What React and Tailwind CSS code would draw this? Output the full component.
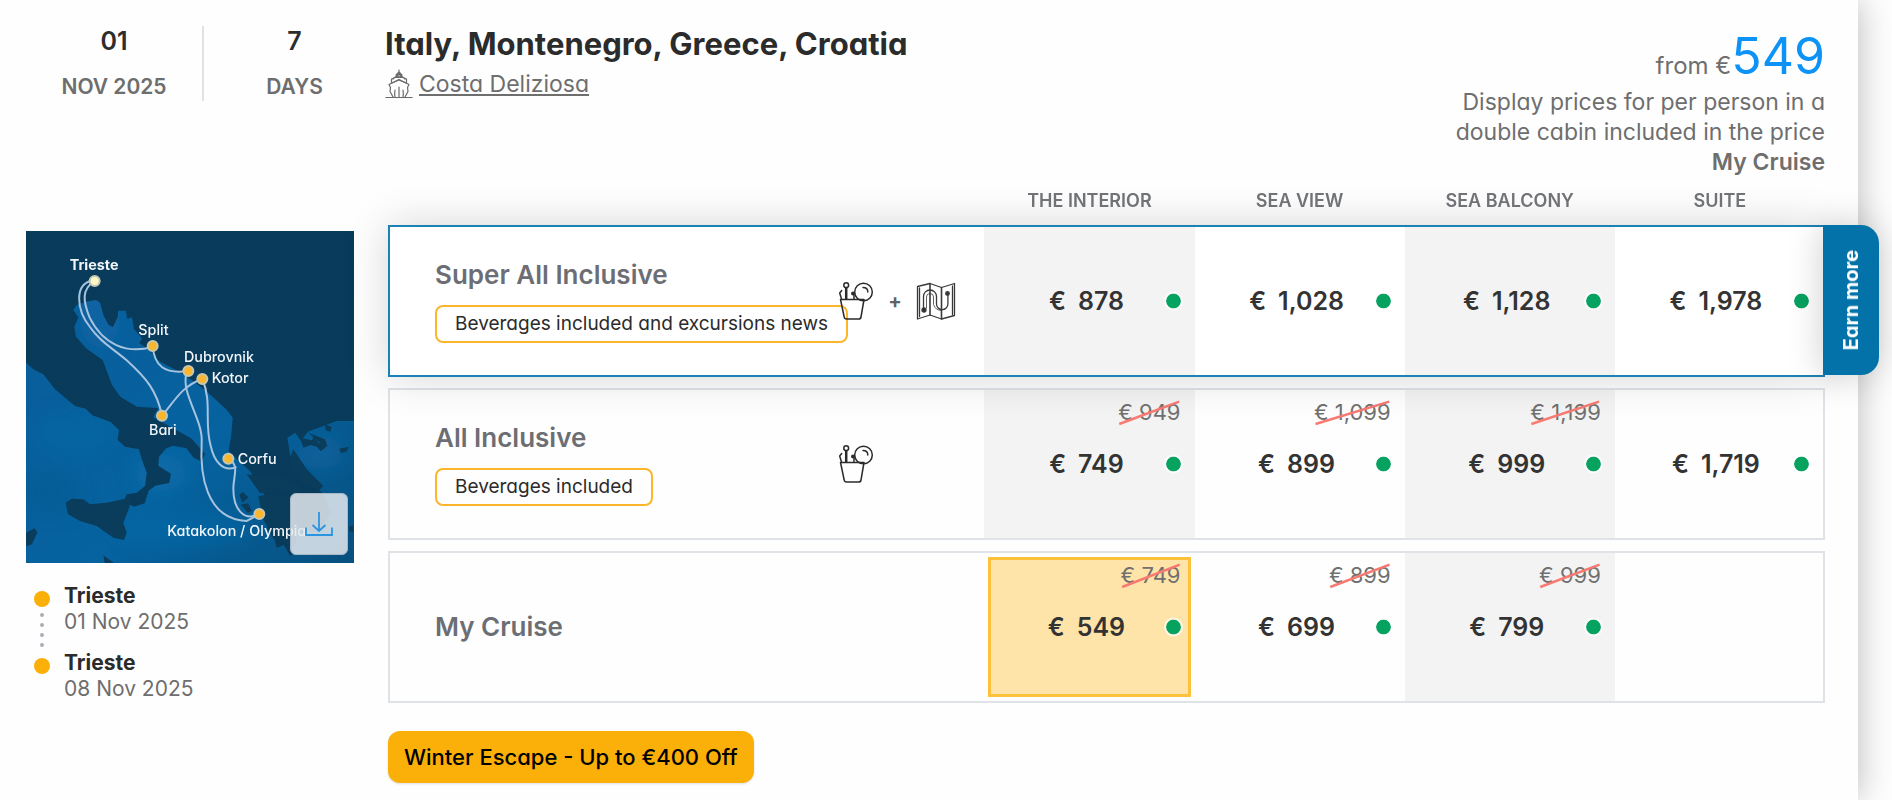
const columns = ['THE INTERIOR', 'SEA VIEW', 'SEA BALCONY', 'SUITE'];

const fares = [
  {
    name: 'Super All Inclusive',
    perk: 'Beverages included and excursions news',
    icons: ['drinks', 'map'],
    featured: true,
    prices: [{ now: '878' }, { now: '1,028' }, { now: '1,128' }, { now: '1,978' }],
  },
  {
    name: 'All Inclusive',
    perk: 'Beverages included',
    icons: ['drinks'],
    prices: [
      { now: '749', was: '949' },
      { now: '899', was: '1,099' },
      { now: '999', was: '1,199' },
      { now: '1,719' },
    ],
  },
  {
    name: 'My Cruise',
    icons: [],
    prices: [
      { now: '549', was: '749', selected: true },
      { now: '699', was: '899' },
      { now: '799', was: '999' },
      null,
    ],
  },
];

const stops = [
  { port: 'Trieste', date: '01 Nov 2025' },
  { port: 'Trieste', date: '08 Nov 2025' },
];

function ShipIcon() {
  return (
    <svg viewBox="0 0 28 30" className="h-[30px] w-7 shrink-0" fill="none" stroke="#6b6b6b" strokeWidth="1.2" strokeLinejoin="round" strokeLinecap="round" aria-hidden="true">
      <path d="M14 1v4M11 6l3-3 3 3M8 10l6-5 6 5M9 8.500h10M6.500 14v-4l7.500-3 7.500 3v4" />
      <path d="M4 15.500l10-5 10 5-1.500 3 .5 4-3 5.500M4 15.500l1.500 3-.5 4 3 5.500" />
      <path d="M14 18v10M10 21c-.5 3-.5 5 0 7M18 21c.5 3 .5 5 0 7M7 14l7-3 7 3" />
      <path d="M.8 28.500h26.400" />
    </svg>
  );
}

function DrinksIcon() {
  return (
    <svg viewBox="0 0 36 40" className="h-10 w-9 shrink-0" fill="none" stroke="#2b2b2b" strokeWidth="1.500" strokeLinejoin="round" strokeLinecap="round" aria-hidden="true">
      <path d="M2.500 18.500h23.500l-3 17.500q-.3 2-2.300 2H8.500q-2 0-2.300-2z" />
      <path d="M3.500 18l-1.800-6 2-2.500M8.700 7v11M7.700 7v11" />
      <circle cx="8.200" cy="4.200" r="2.400" />
      <circle cx="25.500" cy="11" r="8.800" />
      <circle cx="15" cy="12.500" r="1.200" fill="#2b2b2b" />
      <path d="M25 6.500c3 0 4.800 2 4.800 4.500M16 13.500v4.500" />
    </svg>
  );
}

function MapIcon() {
  return (
    <svg viewBox="0 0 40 38" className="h-[38px] w-10 shrink-0" fill="none" stroke="#3a3a3a" strokeWidth="1.300" strokeLinejoin="round" strokeLinecap="round" aria-hidden="true">
      <path d="M1.500 4.500l12.500-3 11.500 4 13-4v32l-13 3.500-11.500-4-12.500 4zM3.500 6v28.500M36.500 4v28.500" />
      <path d="M14 1.500V33M25.500 5.500V37" strokeWidth="1.600" />
      <path d="M7.500 26V14.500a6.500 6.500 0 0 1 13 0V22a5.700 5.700 0 0 0 11.400 0V12" />
      <path d="M10.500 26V15a3.500 3.500 0 0 1 7 0V22.500a8.500 8.500 0 0 0 8 6" strokeWidth=".8" />
      <circle cx="8" cy="28" r="2" fill="#2b2b2b" />
      <circle cx="31.500" cy="11.500" r="1.800" fill="#3a3a3a" />
    </svg>
  );
}

function RouteMap() {
  return (
    <svg viewBox="78 35 984 996" className="block w-full" role="img" aria-label="Cruise route map">
      <defs>
        <linearGradient id="sea" x1="0" y1="0" x2="1" y2="1">
          <stop offset="0" stopColor="#0a5c98" />
          <stop offset=".6" stopColor="#0663a0" />
          <stop offset="1" stopColor="#07507f" />
        </linearGradient>
        <radialGradient id="land" cx=".5" cy=".5" r=".8">
          <stop offset="0" stopColor="#093c5c" />
          <stop offset="1" stopColor="#083a5a" />
        </radialGradient>
        <filter id="soft"><feGaussianBlur stdDeviation="28" /></filter>
        <clipPath id="water">
          <path d="M78 430l22 20 30 15 35 45 30 25 30 25 32 8 20 20 55 20 25 24-4 30 22 20 42 8 8 30 15 40-5 40-25 20-30 5-8 22 30 15 32-10 12-38 20-15 42-8 5-28-38-24 2-26 22-26 20-8 40 8 22 28 24 12 10-24-40-45-50-28-65-36 15-28-64-4-50-30-25-35-28-75-50-35-30-35-5-30 12-28-15-22 10-15 30-10 28-5 12 8 10 38 15 28 14 8 14-30 2-20 22 0 5 25 14-5 6 35 24 28-8 14 32 24 30 32 58 30 44 30 33 26 34 30 32 30 17 22-4 50-8 50 34 34 30 26 24 40 22 35 12 32 10 28-18 18 2 20 22 35 6 22 22-8 18 32 20-8 8 60H78z" />
          <path d="M862 655l24-15 16 25 22-28 60-22 26-10h52v426H880l-4-46 6-44 80-5 30-60-20-48-50-55-30-20-20-36z" />
        </clipPath>
      </defs>
      <rect x="78" y="35" width="984" height="996" fill="url(#land)" />
      <g clipPath="url(#water)">
        <rect x="78" y="35" width="984" height="996" fill="url(#sea)" />
        <g filter="url(#soft)">
          <ellipse cx="480" cy="760" rx="80" ry="60" fill="#1279b8" opacity=".35" />
          <ellipse cx="220" cy="640" rx="120" ry="60" fill="#1173b0" opacity=".3" />
          <ellipse cx="150" cy="820" rx="90" ry="70" fill="#075285" opacity=".3" />
          <ellipse cx="560" cy="930" rx="200" ry="50" fill="#0d6fae" opacity=".4" />
          <ellipse cx="300" cy="290" rx="60" ry="100" fill="#0d68a8" opacity=".6" />
          <ellipse cx="960" cy="700" rx="70" ry="50" fill="#0e66a2" opacity=".6" />
        </g>
      </g>
      <g fill="#0a3c5c">
        <path d="M197 850l18-12 35 2 20 15 50-5 76-16-10 36-16 40 10 30-8 22-32-7-50-35-50-15-36-20z" />
        <path d="M78 940l26-13 8 12-16 36-18 6zM310 1008l32 23h-28zM718 828l10-10 18 16-18 16zM722 856l22-4 12 22-12 6z" />
        <path d="M900 655l30 6 50 18-8 10-40-12-22 8zM925 640l50 20 8 22-22-10zM975 615l20 8-4 14-14-4zM940 650l30 40-8 6-26-30zM1018 688l28-6-6 16-18 2zM1046 922l14-4v20l-12-2zM880 690l40 60 50 50-15 15-50-30-40-60zM905 745l60 48-8 16-50-30zM740 765l40 6 60-2 60 30 10 20-60 4-70-2z" />
        <path d="M775 830l60-8 60 20-5 120-20 30-22-40-18 10-40-60z" />
      </g>
      <g fill="none" stroke="#a6c3df" strokeWidth="6" strokeLinecap="round">
        <path d="M280 183c-60 10-50 90-10 140 30 45 70 65 110 100 60 55 90 90 106 166" />
        <path d="M284 185c-40 25-35 60-15 110 40 80 110 110 189 88" />
        <path d="M458 380c5 60 35 85 107 75" />
        <path d="M486 589c35-40 60-90 121-110" />
        <path d="M560 460c-20 60 50 140 45 210-5 90 10 230 135 235l38-20" />
        <path d="M607 479c30 70 5 130 25 200 10 45 35 80 75 65M685 718c35 20 15 50 15 90 0 60 30 100 78 76" />
      </g>
      <g fill="#fdb52c" stroke="#c5c8b0" strokeWidth="6">
        <circle cx="284" cy="185" r="15" fill="#fdf6c5" />
        <circle cx="458" cy="380" r="15" />
        <circle cx="565" cy="455" r="15" />
        <circle cx="607" cy="479" r="15" />
        <circle cx="486" cy="589" r="15" />
        <circle cx="685" cy="718" r="15" />
        <circle cx="778" cy="884" r="15" />
      </g>
      <g fill="#f2f6fa" fontSize="43" fontWeight="500">
        <text x="209" y="151" fontWeight="700">Trieste</text>
        <text x="415" y="347">Split</text>
        <text x="552" y="427">Dubrovnik</text>
        <text x="635" y="491">Kotor</text>
        <text x="447" y="648">Bari</text>
        <text x="713" y="733">Corfu</text>
        <text x="502" y="949">Katakolon / Olympia</text>
      </g>
    </svg>
  );
}

function PriceCell({ price, shaded, last, featured }) {
  const edge = featured ? 'border-y-2 border-[#1a82b4]' : 'border-y-2 border-[#dfe3e8]';
  return (
    <td className={`relative h-[152px] p-0 ${edge} ${last ? 'border-r-2' : ''} ${shaded && !price?.selected ? 'bg-[#f3f3f3]' : featured ? 'bg-white' : ''}`}>
      {price && (
        <div className={`flex items-center justify-center pr-1.5 text-[25px] leading-8 font-semibold text-[#333] ${price.selected ? 'mx-1 h-[140px] border-[3px] border-[#fdc13c] bg-[#fee4a8]' : ''}`}>
          <span className="flex gap-3">
            <span>€</span>
            <span>{price.now}</span>
          </span>
        </div>
      )}
      {price?.was && (
        <s className="absolute top-1.5 right-3.5 text-[22px] leading-8 text-[#707070] no-underline">
          € {price.was}
          <svg viewBox="0 0 100 40" preserveAspectRatio="none" className="absolute inset-0 h-full w-full" aria-hidden="true">
            <path d="M2 35L98 7" stroke="#f87a72" strokeWidth="2.500" vectorEffect="non-scaling-stroke" />
          </svg>
        </s>
      )}
      {price && (
        <span className="absolute top-1/2 right-3 size-[19px] -translate-y-1/2 rounded-full border-2 border-white/70 bg-[#06a25f] bg-clip-padding" />
      )}
      {featured && last && (
        <button type="button" className="absolute -top-0.5 left-full flex h-[150px] w-[56px] items-center justify-center rounded-r-[18px] bg-[#0272a8] text-[20px] font-bold text-white shadow-[0_0_36px_rgba(0,0,0,0.2)]">
          <span className="rotate-180 [writing-mode:vertical-rl]">Earn more</span>
        </button>
      )}
    </td>
  );
}

function FareRow({ fare }) {
  return (
    <tr className={fare.featured ? 'relative z-10 shadow-[0_0_40px_rgba(0,0,0,0.16)]' : ''}>
      <th scope="row" className={`border-y-2 border-l-2 p-0 text-left font-normal ${fare.featured ? 'border-[#1a82b4] bg-white' : 'border-[#dfe3e8]'}`}>
        <div className="flex items-center pl-[45px]">
          <div className="w-0 flex-1 whitespace-nowrap">
            <div className="text-[26px] leading-8 font-semibold text-[#6c6e74]">{fare.name}</div>
            {fare.perk && (
              <span className="mt-3.5 inline-block rounded-lg border-2 border-[#fdb62b] px-[18px] text-[19px] leading-[34px] text-[#2b2b2b]">
                {fare.perk}
              </span>
            )}
          </div>
          <div className="flex w-[146px] items-center gap-3.5">
            {fare.icons.includes('drinks') && <DrinksIcon />}
            {fare.icons.includes('map') && (
              <>
                <span className="text-[20px] font-bold text-[#5f6268]">+</span>
                <MapIcon />
              </>
            )}
          </div>
        </div>
      </th>
      {fare.prices.map((price, i) => (
        <PriceCell key={i} price={price} shaded={i % 2 === 0} last={i === 3} featured={fare.featured} />
      ))}
    </tr>
  );
}

export default function App() {
  return (
    <div className="min-h-screen overflow-x-hidden bg-[#fefefe] pr-[34px] font-['Inter','Open_Sans',sans-serif] text-[#6e6e6e] [font-feature-settings:'cv11']">
      <main className="min-h-screen bg-[#fefefe] pr-[33px] pl-[26px] shadow-[0_0_34px_rgba(0,0,0,0.28)]">
        <header className="flex pt-[26px]">
          <div className="flex h-[75px] w-[359px] shrink-0 text-center text-[21px] font-semibold">
            <div className="w-[176px]">
              <div className="text-[25px] leading-[30px] text-[#2d2d2d]">01</div>
              <div className="mt-4 leading-[30px]">NOV 2025</div>
            </div>
            <div className="flex-1 border-l-2 border-[#e2e2e2]">
              <div className="text-[25px] leading-[30px] text-[#2d2d2d]">7</div>
              <div className="mt-4 leading-[30px]">DAYS</div>
            </div>
          </div>
          <div className="flex-1">
            <h1 className="text-[31px] leading-9 font-bold text-[#2b2b2b]">Italy, Montenegro, Greece, Croatia</h1>
            <div className="mt-1.5 flex items-center gap-1.5">
              <ShipIcon />
              <a href="#ship" className="text-[23px] leading-8 underline decoration-2 underline-offset-2">Costa Deliziosa</a>
            </div>
          </div>
          <div className="text-right text-[23px] leading-[30px]">
            <div className="flex items-baseline justify-end">
              <span className="text-[24px] leading-none">from €</span>
              <span className="text-[50px] leading-[61px] text-[#0c93f5]">549</span>
            </div>
            <p>
              Display prices for per person in a<br />
              double cabin included in the price<br />
              <strong className="font-semibold">My Cruise</strong>
            </p>
          </div>
        </header>

        <div className="flex gap-[34px]">
          <aside className="w-[328px] shrink-0 pt-[54px]">
            <div className="relative">
              <RouteMap />
              <button type="button" aria-label="Download map" className="absolute right-1.5 bottom-2 flex h-[62px] w-[58px] items-center justify-center rounded-md border border-[#a9b8c4] bg-[#e4eaee]/85">
                <svg viewBox="0 0 30 26" className="h-[26px] w-[30px]" fill="none" stroke="#2b95e0" strokeWidth="1.800" aria-hidden="true">
                  <path d="M15 1v19M8.500 14l6.500 6 6.500-6M2 16.500V24h26v-7.500" />
                </svg>
              </button>
            </div>
            <ol className="mt-5 pl-2">
              {stops.map((stop, i) => (
                <li key={stop.date} className="flex gap-3.5 text-[21px] leading-[26px]">
                  <div className="flex w-4 shrink-0 flex-col items-center gap-1.5 pt-2">
                    <span className="size-4 rounded-full bg-[#fab008]" />
                    {i === 0 && [0, 1, 2, 3].map((dot) => <span key={dot} className="size-1 rounded-full bg-[#a9aeb6]" />)}
                  </div>
                  <div className="pb-[15px]">
                    <div className="font-bold text-[#2b2b2b]">{stop.port}</div>
                    <div>{stop.date}</div>
                  </div>
                </li>
              ))}
            </ol>
          </aside>

          <section className="min-w-0 flex-1">
            <table className="w-full table-fixed border-separate border-spacing-x-0 border-spacing-y-[11px]">
              <thead>
                <tr className="h-[26px]">
                  <td className="w-[41.500%] p-0" />
                  {columns.map((label) => (
                    <th key={label} scope="col" className="relative z-20 p-0 text-[18px] leading-[26px] font-semibold text-[#707276]">
                      {label}
                    </th>
                  ))}
                </tr>
              </thead>
              <tbody>
                {fares.map((fare) => (
                  <FareRow key={fare.name} fare={fare} />
                ))}
              </tbody>
            </table>
            <button type="button" className="mt-[17px] h-[52px] rounded-xl bg-[#fab008] px-4 text-[22px] font-medium text-black shadow-sm">
              Winter Escape - Up to €400 Off
            </button>
          </section>
        </div>
      </main>
    </div>
  );
}
